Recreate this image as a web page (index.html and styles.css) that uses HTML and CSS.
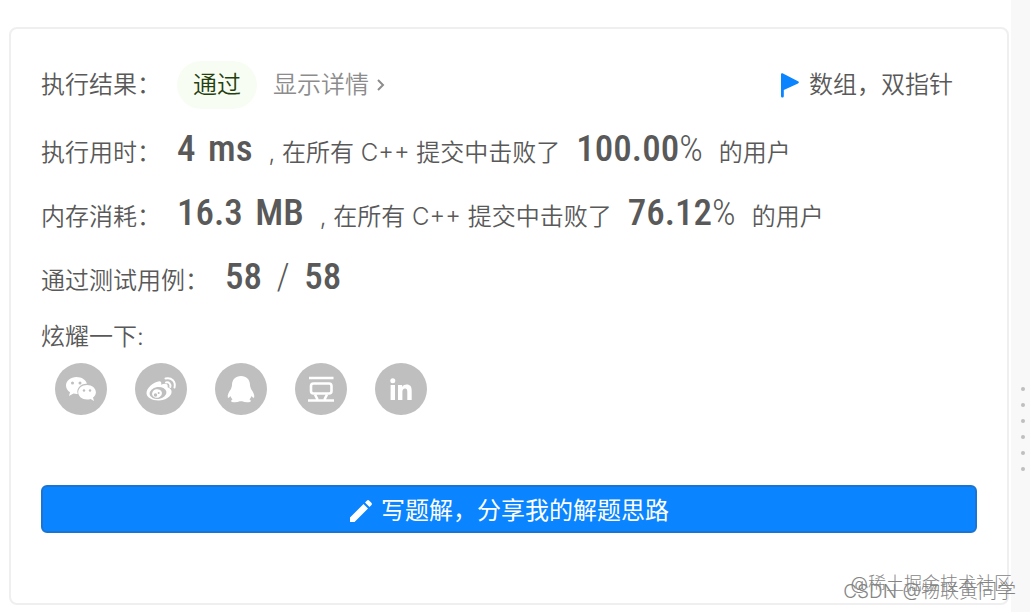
FILE: index.html
```html
<!DOCTYPE html>
<html lang="zh-CN">
<head>
  <meta charset="UTF-8">
  <meta name="viewport" content="width=device-width, initial-scale=1">
  <title>执行结果</title>
  <link rel="stylesheet" href="styles.css">
</head>
<body>
  <main class="page">
    <section class="card">
      <div class="row row-status">
        <span class="label">执行结果：</span>
        <span class="status">通过</span>
        <a href="#" class="details">显示详情
          <svg width="8" height="14" viewBox="0 0 8 14"><path d="M1 2l5 5-5 5" fill="none" stroke="currentColor" stroke-width="2"/></svg>
        </a>
        <div class="tags">
          <svg width="18" height="25" viewBox="0 0 18 25"><path d="M0 1.5C0 .3 1 0 2 .4L17 8.200c1.200.7 1.200 1.500 0 2.200L2.800 17v6c0 2-2.800 2-2.800 0z" fill="#0a84ff"/></svg>
          <span>数组，双指针</span>
        </div>
      </div>

      <div class="row">
        <span class="label">执行用时：</span>
        <span class="number">4 <span class="unit">ms</span></span>
        <span>, 在所有 C++ 提交中击败了</span>
        <span class="number">100.00<span class="percent">%</span></span>
        <span>的用户</span>
      </div>

      <div class="row">
        <span class="label">内存消耗：</span>
        <span class="number">16.3 <span class="unit">MB</span></span>
        <span>, 在所有 C++ 提交中击败了</span>
        <span class="number">76.12<span class="percent">%</span></span>
        <span>的用户</span>
      </div>

      <div class="row">
        <span class="label">通过测试用例：</span>
        <span class="number">58 <span class="slash">/</span> 58</span>
      </div>

      <div class="share-title">炫耀一下:</div>
      <div class="share">
        <button class="share-btn" aria-label="微信">
          <svg viewBox="0 0 52 52">
            <path d="M21.500 14c-5.800 0-10.500 3.700-10.500 8.500 0 2.800 1.500 5.200 4 6.700L14 33l4.500-2.500c1.500.4 2.800.5 4.200.4-1.700-6 3.500-10.500 9.200-10.100C31 16.800 26.700 14 21.500 14z"/>
            <path d="M32 22c-5 0-8.800 3.200-8.800 7.300S27 36.500 32 36.500c1.300 0 2.500-.2 3.600-.6L39 38l-1-3.500c1.800-1.300 2.900-3.100 2.900-5.200C40.900 25.200 37 22 32 22z"/>
            <g fill="#bfbfbf"><circle cx="17.500" cy="20" r="1.500"/><circle cx="25" cy="20" r="1.500"/><circle cx="29" cy="27.500" r="1.200"/><circle cx="35" cy="27.500" r="1.200"/></g>
          </svg>
        </button>
        <button class="share-btn" aria-label="微博">
          <svg viewBox="0 0 52 52">
            <path d="M23.500 18.500c2-.6 3.500.7 2.600 3.200 3.500-1.500 7.500-1.300 6.500 2.500 2.400.8 4 2 4 4.600 0 4.500-6 8.700-13 8.700S11.500 34.300 11.500 30c0-4.800 6.500-10.400 12-11.500z"/>
            <ellipse cx="23" cy="30" rx="8.500" ry="6" fill="#bfbfbf" transform="rotate(-8 23 30)"/>
            <ellipse cx="22" cy="30.500" rx="5" ry="4.300" transform="rotate(-15 22 30.500)"/>
            <g fill="#bfbfbf"><circle cx="20.500" cy="32" r="1.700"/><circle cx="23.700" cy="30" r="1"/></g>
            <path d="M30.500 15.500c6-1.500 10.500 3 9 9M31 19.500c3-.7 5 1.500 4.300 4.500" fill="none" stroke="#fff" stroke-width="2" stroke-linecap="round"/>
          </svg>
        </button>
        <button class="share-btn" aria-label="QQ">
          <svg viewBox="0 0 52 52">
            <path d="M26 13c-5.500 0-9 3.800-9 9 0 1.500-.7 2.500-1 4-2.300 3-3.700 6-3.200 8.300.3 1.200 1.500.3 2.700-1.200.4 1.400 1 2.400 2 3.300-1.500.6-1.800 2-.5 2.500 2.400.8 5.600.5 7.800-.6h2.400c2.200 1.100 5.400 1.400 7.800.6 1.300-.5 1-1.900-.5-2.500 1-.9 1.600-1.900 2-3.300 1.200 1.500 2.400 2.400 2.700 1.200.5-2.300-.9-5.300-3.200-8.300-.3-1.500-1-2.500-1-4 0-5.200-3.500-9-9-9z"/>
          </svg>
        </button>
        <button class="share-btn" aria-label="豆瓣">
          <svg viewBox="0 0 52 52">
            <path d="M14 15h24.500M13 37.500h26M20 31.500l2.500 5M32 31.500l-2.500 5" fill="none" stroke="#fff" stroke-width="2.600"/>
            <rect x="16" y="20.500" width="20.500" height="10" rx="2.500" fill="none" stroke="#fff" stroke-width="2.600"/>
          </svg>
        </button>
        <button class="share-btn" aria-label="领英">
          <svg viewBox="0 0 52 52">
            <circle cx="17.800" cy="17.800" r="2.500"/>
            <path d="M15.600 22h4.400v15h-4.400zM23 22h4.200v2c1-1.600 2.600-2.400 4.500-2.400 3.600 0 5 2.200 5 6.200V37h-4.400v-8.200c0-2.200-.6-3.400-2.200-3.400-1.800 0-2.700 1.300-2.700 3.400V37H23z"/>
          </svg>
        </button>
      </div>

      <button class="write">
        <svg width="24" height="24" viewBox="0 0 24 24"><path d="M1 18.500L14.500 5l4.500 4.500L5.500 23H1zM16 3.500l1.800-1.800c.8-.8 1.700-.8 2.500 0l2 2c.8.8.8 1.700 0 2.500L20.500 8z" fill="#fff"/></svg>
        写题解，分享我的解题思路
      </button>
    </section>

    <aside class="gutter">
      <i></i><i></i><i></i><i></i><i></i><i></i>
    </aside>
  </main>

  <div class="watermark community">@稀土掘金技术社区</div>
  <div class="watermark author">CSDN @物联黄同学</div>
</body>
</html>
```
FILE: styles.css
```css
* {
  box-sizing: border-box;
}

body {
  margin: 0;
  background: #fff;
  color: #595959;
  font-family: Inter, "Noto Sans CJK SC", sans-serif;
  font-size: 24px;
  font-weight: 350;
  line-height: 32px;
}

button {
  border: none;
  padding: 0;
  font: inherit;
  cursor: pointer;
}

.page {
  display: flex;
  min-height: 100vh;
}

.card {
  flex: 1;
  margin: 27px 2px 7px 9px;
  padding: 24px 30px;
  border: 2px solid #efefef;
  border-radius: 8px;
}

.row {
  display: flex;
  align-items: baseline;
  gap: 16px;
  height: 64px;
  line-height: 64px;
  white-space: nowrap;
}

.row-status {
  align-items: center;
}

.status {
  padding: 0 16px;
  border-radius: 24px;
  background: #f8fdf4;
  color: #25400f;
  line-height: 48px;
}

.details {
  display: flex;
  align-items: center;
  gap: 8px;
  color: #8c8c8c;
  text-decoration: none;
}

.tags {
  display: flex;
  align-items: center;
  gap: 10px;
  margin-left: auto;
  margin-right: 24px;
}

.number {
  font-family: "Roboto Condensed", Roboto, sans-serif;
  font-size: 37px;
  font-weight: 500;
}

.percent,
.slash {
  font-weight: 300;
}

.unit {
  margin-left: 4px;
}

.slash {
  margin: 0 6px;
}

.share-title {
  margin-top: 12px;
}

.share {
  display: flex;
  gap: 28px;
  margin: 10px 14px 0;
}

.share-btn {
  width: 52px;
  height: 52px;
  border-radius: 50%;
  background: #bfbfbf;
}

.share-btn svg {
  display: block;
  fill: #fff;
}

.write {
  display: flex;
  align-items: center;
  justify-content: center;
  gap: 8px;
  width: 100%;
  height: 48px;
  margin-top: 70px;
  padding-top: 4px;
  border: 2px solid #1b74cf;
  border-radius: 6px;
  background: #0a84ff;
  color: #fff;
  font-weight: 400;
}

.gutter {
  display: flex;
  flex-direction: column;
  align-items: flex-end;
  gap: 12px;
  width: 19px;
  padding: 387px 5px 0 0;
  background: #f8f8f8;
}

.gutter i {
  width: 4px;
  height: 4px;
  border-radius: 50%;
  background: #bfbfbf;
}

/* watermarks lie over the card corner */
.watermark {
  position: absolute;
  color: #858585;
  font-family: Inter, "Noto Sans CJK SC", sans-serif;
  font-weight: 300;
  line-height: 24px;
  white-space: nowrap;
}

.community {
  right: 18px;
  bottom: 16px;
  font-size: 18px;
}

.author {
  right: 14px;
  bottom: 8px;
  font-size: 19px;
}
```
